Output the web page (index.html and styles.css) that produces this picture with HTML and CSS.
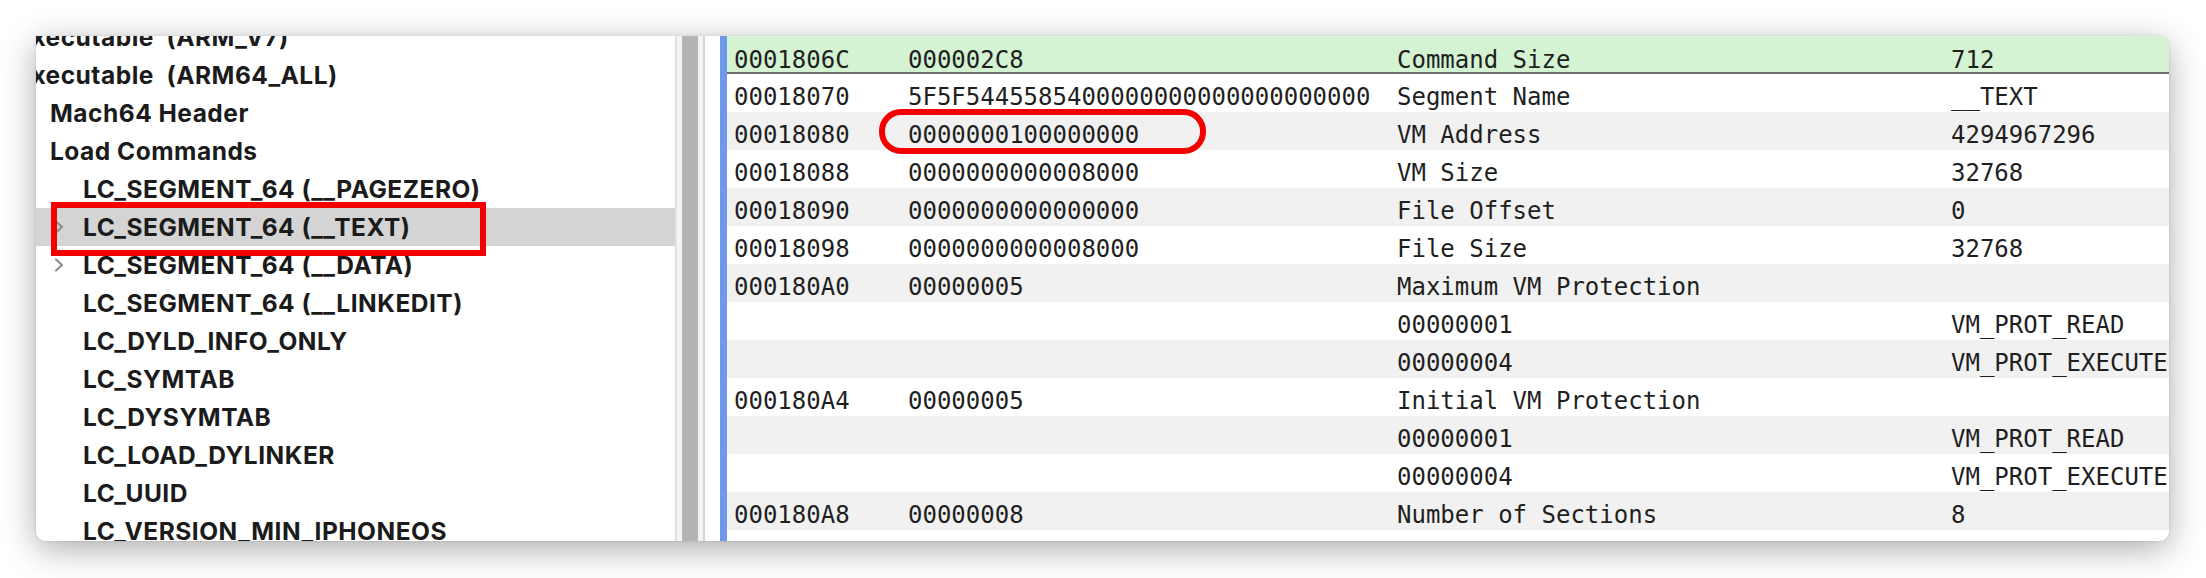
FILE: index.html
```html
<!DOCTYPE html>
<html>
<head>
<meta charset="utf-8">
<link rel="stylesheet" href="styles.css">
</head>
<body>
<div class="window">
  <div class="tree">
    <div class="tree-inner">
      <div class="row lvl0"><span class="label">Executable  (ARM_V7)</span></div>
      <div class="row lvl0"><span class="label">Executable  (ARM64_ALL)</span></div>
      <div class="row lvl1"><span class="label">Mach64 Header</span></div>
      <div class="row lvl1"><span class="label">Load Commands</span></div>
      <div class="row lvl2"><span class="chev"></span><span class="label">LC_SEGMENT_64 (__PAGEZERO)</span></div>
      <div class="row lvl2 sel"><span class="chev"><svg width="10" height="14" viewBox="0 0 10 14"><path d="M2 1.5 L8 7 L2 12.5" fill="none" stroke="#8a8a8a" stroke-width="2" stroke-linecap="round" stroke-linejoin="round"/></svg></span><span class="label">LC_SEGMENT_64 (__TEXT)</span></div>
      <div class="row lvl2"><span class="chev"><svg width="10" height="14" viewBox="0 0 10 14"><path d="M2 1.5 L8 7 L2 12.5" fill="none" stroke="#8a8a8a" stroke-width="2" stroke-linecap="round" stroke-linejoin="round"/></svg></span><span class="label">LC_SEGMENT_64 (__DATA)</span></div>
      <div class="row lvl2"><span class="chev"></span><span class="label">LC_SEGMENT_64 (__LINKEDIT)</span></div>
      <div class="row lvl2"><span class="chev"></span><span class="label">LC_DYLD_INFO_ONLY</span></div>
      <div class="row lvl2"><span class="chev"></span><span class="label">LC_SYMTAB</span></div>
      <div class="row lvl2"><span class="chev"></span><span class="label">LC_DYSYMTAB</span></div>
      <div class="row lvl2"><span class="chev"></span><span class="label">LC_LOAD_DYLINKER</span></div>
      <div class="row lvl2"><span class="chev"></span><span class="label">LC_UUID</span></div>
      <div class="row lvl2"><span class="chev"></span><span class="label">LC_VERSION_MIN_IPHONEOS</span></div>
    </div>
  </div>
  <div class="divider">
    <span class="d1"></span><span class="d2"></span><span class="d3"></span><span class="d4"></span><span class="d5"></span><span class="d6"></span><span class="d7"></span>
  </div>
  <div class="table">
    <div class="trow head"><span>0001806C</span><span>000002C8</span><span>Command Size</span><span>712</span></div>
    <div class="trow"><span>00018070</span><span>5F5F5445585400000000000000000000</span><span>Segment Name</span><span>__TEXT</span></div>
    <div class="trow"><span>00018080</span><span>0000000100000000</span><span>VM Address</span><span>4294967296</span></div>
    <div class="trow"><span>00018088</span><span>0000000000008000</span><span>VM Size</span><span>32768</span></div>
    <div class="trow"><span>00018090</span><span>0000000000000000</span><span>File Offset</span><span>0</span></div>
    <div class="trow"><span>00018098</span><span>0000000000008000</span><span>File Size</span><span>32768</span></div>
    <div class="trow"><span>000180A0</span><span>00000005</span><span>Maximum VM Protection</span><span></span></div>
    <div class="trow"><span></span><span></span><span>00000001</span><span>VM_PROT_READ</span></div>
    <div class="trow"><span></span><span></span><span>00000004</span><span>VM_PROT_EXECUTE</span></div>
    <div class="trow"><span>000180A4</span><span>00000005</span><span>Initial VM Protection</span><span></span></div>
    <div class="trow"><span></span><span></span><span>00000001</span><span>VM_PROT_READ</span></div>
    <div class="trow"><span></span><span></span><span>00000004</span><span>VM_PROT_EXECUTE</span></div>
    <div class="trow"><span>000180A8</span><span>00000008</span><span>Number of Sections</span><span>8</span></div>
    <div class="trow"><span></span><span></span><span></span><span></span></div>
  </div>
  <div class="mark mark-rect"></div>
  <div class="mark mark-round"></div>
</div>
</body>
</html>
```

FILE: styles.css
```css
html, body {
  margin: 0;
  padding: 0;
  background: #ffffff;
}

body {
  width: 2206px;
  height: 578px;
  overflow: hidden;
  padding: 36px 0 0 36px;
  box-sizing: border-box;
}

.window {
  position: relative;
  width: 2133px;
  height: 505px;
  display: flex;
  background: #ffffff;
  border-radius: 0 10px 10px 10px;
  box-shadow: 0 8px 34px rgba(0, 0, 0, 0.33), 0 0 3px rgba(0, 0, 0, 0.12);
  overflow: hidden;
}

/* ---------- outline (left pane) ---------- */
.tree {
  flex: 0 0 639px;
  overflow: hidden;
  background: #ffffff;
  font-family: Inter, "Liberation Sans", sans-serif;
  font-weight: 700;
  font-size: 24.5px;
  letter-spacing: 0.5px;
  color: #1b1b1b;
}

.tree-inner {
  margin-top: -18px;
}

.row {
  height: 38px;
  display: flex;
  white-space: pre;
}

.row .label {
  line-height: 37px;
  padding-top: 1px;
}

.lvl0 .label {
  margin-left: -20px;
}

.lvl1 {
  padding-left: 14px;
}

.lvl2 {
  padding-left: 18px;
}

.chev {
  flex: none;
  width: 29px;
  height: 38px;
  display: flex;
  align-items: center;
}

.row.sel {
  background: #d4d4d4;
}

/* ---------- split divider ---------- */
.divider {
  flex: 0 0 52px;
  display: flex;
}

.divider span { display: block; height: 100%; }
.divider .d1 { width: 2px; background: #e2e2e2; }
.divider .d2 { width: 5px; background: #f4f4f4; }
.divider .d3 { width: 16px; background: #b4b4b4; }
.divider .d4 { width: 5px; background: #f2f2f2; }
.divider .d5 { width: 2px; background: #d6d6d6; }
.divider .d6 { width: 15px; background: #ffffff; }
.divider .d7 { width: 7px; background: #7098e8; }

/* ---------- detail table (right pane) ---------- */
.table {
  flex: 1;
  overflow: hidden;
  font-family: "DejaVu Sans Mono", "Liberation Mono", monospace;
  font-size: 24px;
  color: #1f1f1f;
}

.trow {
  display: grid;
  grid-template-columns: 174px 489px 554px 1fr;
  height: 38px;
  box-sizing: border-box;
  padding: 9px 0 0 7px;
  line-height: 29px;
  white-space: pre;
  background: #ffffff;
}

.trow:nth-child(odd) {
  background: #f0f1f0;
}

.trow.head {
  background: #d3f3d3;
  border-bottom: 2px solid #6d6d6d;
  padding-top: 12px;
  line-height: 24px;
}

/* ---------- annotation marks ---------- */
.mark {
  position: absolute;
  box-sizing: border-box;
  border: 6px solid #f30000;
  pointer-events: none;
}

.mark-rect {
  left: 15px;
  top: 166px;
  width: 435px;
  height: 54px;
}

.mark-round {
  left: 843px;
  top: 73px;
  width: 327px;
  height: 45px;
  border-radius: 22px;
}
```
